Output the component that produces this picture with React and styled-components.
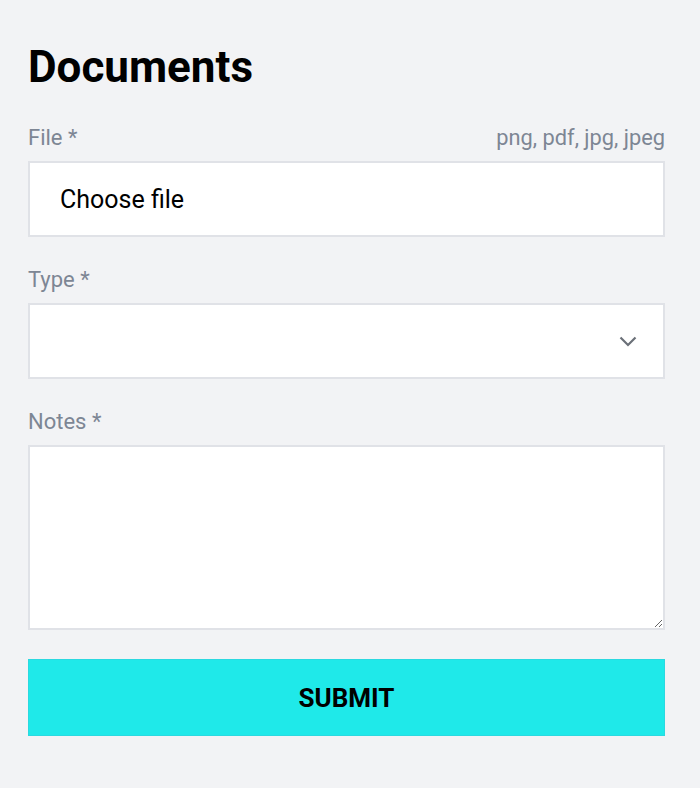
import React from "react";
import styled, { createGlobalStyle } from "styled-components";

const GlobalStyle = createGlobalStyle`
  body {
    margin: 0;
    background: #f2f3f5;
    font-family: Roboto, "Liberation Sans", sans-serif;
  }
`;

const Page = styled.div`
  padding: 41px 35px 40px 28px;
`;

const Title = styled.h1`
  margin: 0 0 32px;
  font-size: 44px;
  line-height: 52px;
  font-weight: 700;
  color: #000;
`;

const Form = styled.form`
  display: flex;
  flex-direction: column;
`;

const Field = styled.div`
  display: flex;
  flex-direction: column;
  margin-bottom: 30px;
`;

const LabelRow = styled.div`
  display: flex;
  justify-content: space-between;
  align-items: baseline;
  margin-bottom: 10px;
  font-size: 22px;
  line-height: 26px;
  color: #7d8694;
`;

const Hint = styled.span`
  font-size: 21.8px;
`;

const Box = styled.div`
  box-sizing: border-box;
  height: 76px;
  background: #fff;
  border: 2px solid #e0e2e7;
  display: flex;
  align-items: center;
  justify-content: space-between;
  padding: 0 26px 0 30px;
  font-size: 25px;
  color: #000;
`;

const TextArea = styled.textarea`
  box-sizing: border-box;
  height: 185px;
  background: #fff;
  border: 2px solid #e0e2e7;
  resize: vertical;
  font-family: inherit;
  font-size: 20px;
  outline: none;
`;

const Submit = styled.button`
  height: 77px;
  margin-top: -1px;
  border: 1px solid #2bd9e0;
  background: #1fe9e9;
  font-family: inherit;
  font-size: 26px;
  font-weight: 700;
  color: #000;
  cursor: pointer;
`;

const Chevron = () => (
  <svg width="18" height="11" viewBox="0 0 18 11" fill="none">
    <path d="M1.5 1.5L9 9l7.5-7.5" stroke="#6b7078" strokeWidth="2.2" />
  </svg>
);

export default function App() {
  return (
    <Page>
      <GlobalStyle />
      <Title>Documents</Title>
      <Form onSubmit={(e) => e.preventDefault()}>
        <Field>
          <LabelRow>
            <span>File *</span>
            <Hint>png, pdf, jpg, jpeg</Hint>
          </LabelRow>
          <Box>Choose file</Box>
        </Field>
        <Field>
          <LabelRow>
            <span>Type *</span>
          </LabelRow>
          <Box>
            <span />
            <Chevron />
          </Box>
        </Field>
        <Field>
          <LabelRow>
            <span>Notes *</span>
          </LabelRow>
          <TextArea />
        </Field>
        <Submit type="submit">SUBMIT</Submit>
      </Form>
    </Page>
  );
}
